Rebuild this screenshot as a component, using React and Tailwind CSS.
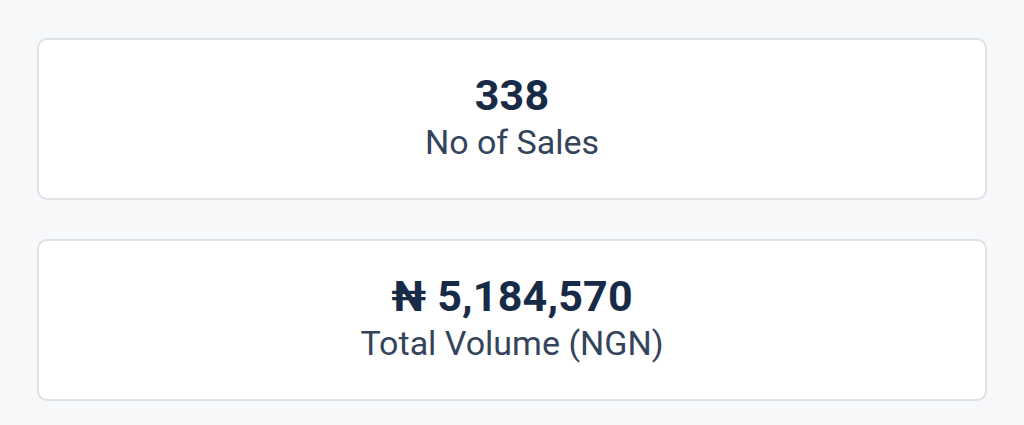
import React from "react";

const stats = [
  { value: "338", label: "No of Sales" },
  { value: "₦ 5,184,570", label: "Total Volume (NGN)" },
];

const StatCard = ({ value, label }) => (
  <div className="h-[162px] pb-[5px] bg-white border-2 border-[#dfe2e7] rounded-[10px] flex flex-col items-center justify-center">
    <p className="text-[43px] leading-[50px] font-bold text-[#172a46] tracking-[0.2px]">{value}</p>
    <p className="text-[34px] leading-[44px] text-[#34445a]">{label}</p>
  </div>
);

export default function App() {
  return (
    <div
      className="w-[1024px] h-[425px] bg-[#f7f8fa] px-[37px] pt-[38px] flex flex-col gap-[39px]"
      style={{ fontFamily: "Roboto, 'Noto Sans', sans-serif" }}
    >
      {stats.map((s) => (
        <StatCard key={s.label} value={s.value} label={s.label} />
      ))}
    </div>
  );
}
